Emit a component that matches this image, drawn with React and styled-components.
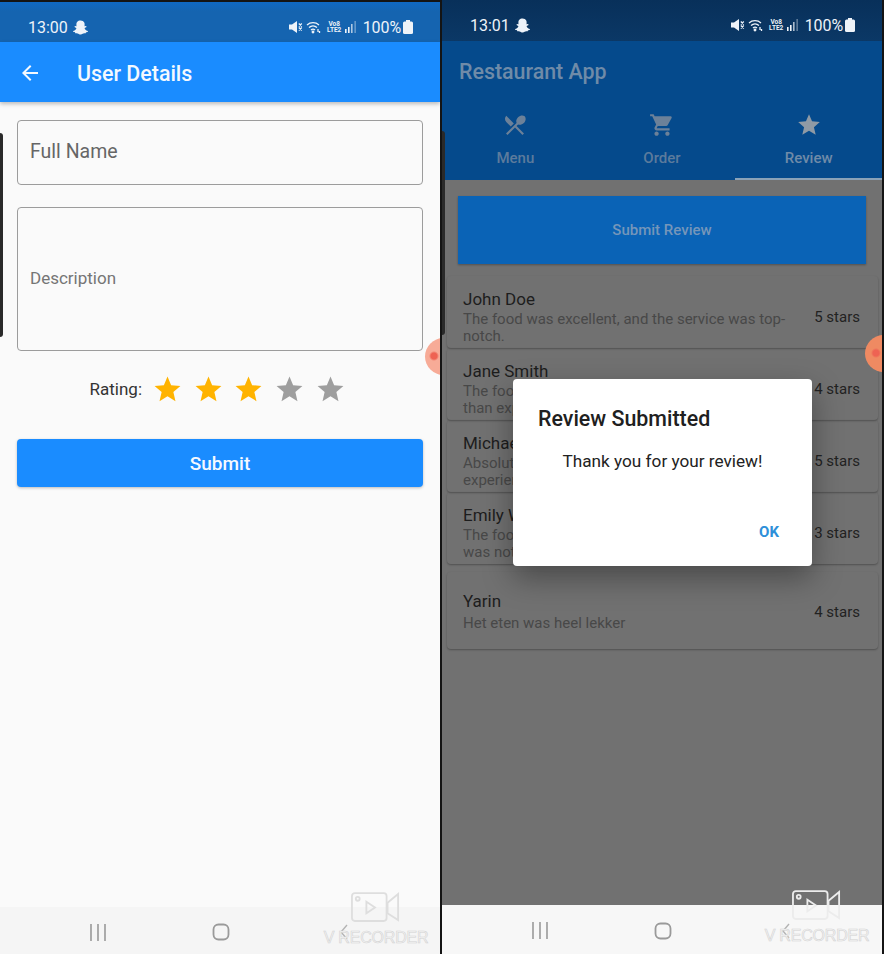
import React from "react";
import styled, { createGlobalStyle } from "styled-components";
import { FaSnapchatGhost } from "react-icons/fa";
import { MdArrowBack, MdRestaurantMenu, MdShoppingCart, MdStar } from "react-icons/md";

const GlobalStyle = createGlobalStyle`
  html, body { margin: 0; padding: 0; background: #141414; }
  body { font-family: Roboto, "Liberation Sans", sans-serif; }
  * { box-sizing: border-box; }
`;

const Screens = styled.div`
  display: flex;
  gap: 2px;
  width: 884px;
  height: 954px;
  overflow: hidden;
`;

const Phone = styled.section`
  position: relative;
  display: flex;
  flex-direction: column;
  width: 440px;
  margin-top: ${(p) => (p.$dimmed ? "0" : "2px")};
  overflow: hidden;
  background: ${(p) => (p.$dimmed ? "#717171" : "#fafafa")};
`;

const Status = styled.div`
  display: flex;
  align-items: center;
  justify-content: space-between;
  flex: none;
  height: ${(p) => (p.$dimmed ? "41px" : "40px")};
  padding: ${(p) => (p.$dimmed ? "14px 27px 5px 28px" : "15px 27px 5px 28px")};
  color: #eef3f9;
  font-size: 16px;
  background: ${(p) =>
    p.$dimmed
      ? "linear-gradient(#08305a, #0b3866)"
      : "linear-gradient(#0f69c4 0, #1564b0 9px)"};
`;

const StatusSide = styled.div`
  display: flex;
  align-items: center;
  gap: ${(p) => p.$gap || 0}px;
`;

const Volte = styled.span`
  display: flex;
  flex-direction: column;
  align-items: center;
  width: 13px;
  margin: 0 4px 0 7px;
  font-size: 6.5px;
  font-weight: 700;
  line-height: 6.5px;
`;

const Percent = styled.span`
  margin: 0 2px 0 7px;
  letter-spacing: -0.1px;
`;

const MuteIcon = () => (
  <svg width="14" height="14" viewBox="0 0 14 14" fill="currentColor" style={{ marginRight: 3 }}>
    <path d="M0 4.5h3L8 1v12L3 9.5H0z" />
    <path d="M9.8 3.5l3 3M12.8 3.5l-3 3M9.8 7.5l3 3M12.8 7.5l-3 3" stroke="currentColor" strokeWidth="1.2" />
  </svg>
);

const WifiIcon = () => (
  <svg width="15" height="14" viewBox="0 0 15 14" fill="none" stroke="currentColor" strokeWidth="1.3">
    <path d="M1 5a9 9 0 0 1 12 0" />
    <path d="M3 7.5a6 6 0 0 1 8 0" />
    <path d="M5 10a3 3 0 0 1 4 0" />
    <circle cx="7" cy="12" r="0.8" fill="currentColor" />
    <path d="M12 9v3M13.5 11v2" />
  </svg>
);

const SignalBars = () => (
  <svg width="11" height="14" viewBox="0 0 11 14" fill="currentColor">
    <rect x="0" y="9" width="1.6" height="4" />
    <rect x="3" y="7" width="1.6" height="6" />
    <rect x="6" y="4" width="1.6" height="9" opacity="0.7" />
    <rect x="9.6" y="1" width="1" height="12" opacity="0.6" />
  </svg>
);

const BatteryIcon = () => (
  <svg width="10" height="14" viewBox="0 0 10 14" fill="currentColor">
    <rect x="3" y="0" width="4" height="2" />
    <rect x="0" y="1.5" width="10" height="12.5" rx="1.5" />
  </svg>
);

const StatusBar = ({ time, dimmed }) => (
  <Status $dimmed={dimmed}>
    <StatusSide $gap={5}>
      {time}
      <FaSnapchatGhost size={15} />
    </StatusSide>
    <StatusSide>
      <MuteIcon />
      <WifiIcon />
      <Volte>
        <span>Vo8</span>
        <span>LTE2</span>
      </Volte>
      <SignalBars />
      <Percent>100%</Percent>
      <BatteryIcon />
    </StatusSide>
  </Status>
);

const AppBar = styled.header`
  display: flex;
  align-items: center;
  gap: 35px;
  flex: none;
  height: 60px;
  padding: 2px 0 0 18px;
  color: #f4f9ff;
  font-size: 21.4px;
  font-weight: 500;
  background: #1a8cff;
  box-shadow: 0 2px 4px rgba(0, 0, 0, 0.25);
`;

const Form = styled.main`
  display: flex;
  flex-direction: column;
  flex: 1;
  padding: 18px 17px 0;
`;

const Field = styled.div`
  display: flex;
  align-items: center;
  height: ${(p) => p.$height}px;
  margin-bottom: 22px;
  padding: 0 0 2px 12px;
  border: 1.5px solid #9c9c9c;
  border-radius: 4px;
  color: ${(p) => p.$color};
  font-size: ${(p) => p.$size}px;
`;

const RatingRow = styled.div`
  display: flex;
  align-items: center;
  justify-content: center;
  margin: -4px 0 30px;
  height: 40px;
  color: #333;
  font-size: 17px;
`;

const RatingLabel = styled.span`
  margin-right: 5px;
`;

const StarSlot = styled.span`
  display: flex;
  justify-content: center;
  width: 40.7px;
  color: ${(p) => (p.$on ? "#ffb300" : "#9e9e9e")};
`;

const SubmitButton = styled.button`
  height: 48px;
  border: 0;
  border-radius: 4px;
  color: #f4f9ff;
  font: 500 19px Roboto, sans-serif;
  background: #1a8cff;
  box-shadow: 0 1px 3px rgba(0, 0, 0, 0.25);
`;

const NavArea = styled.nav`
  display: grid;
  grid-template-columns: repeat(3, 123px);
  justify-content: center;
  justify-items: center;
  align-items: center;
  flex: none;
  height: ${(p) => (p.$dimmed ? "49px" : "47px")};
  padding: ${(p) => (p.$dimmed ? "2px" : "3px")} 0 0 2px;
  color: #9a9a9a;
  background: ${(p) => (p.$dimmed ? "#f7f7f7" : "#f5f5f5")};
`;

const NavBar = ({ dimmed }) => (
  <NavArea $dimmed={dimmed}>
    <svg width="18" height="17" viewBox="0 0 18 17" stroke="currentColor" strokeWidth="1.6">
      <path d="M2 0v17M9 0v17M16 0v17" />
    </svg>
    <svg width="18" height="18" viewBox="0 0 18 18" fill="none" stroke="currentColor" strokeWidth="1.8">
      <rect x="1.5" y="1.5" width="15" height="15" rx="5" />
    </svg>
    <svg width="8" height="16" viewBox="0 0 8 16" fill="none" stroke="#b4b4b4" strokeWidth="1.4">
      <path d="M7 1 1 8l6 7" />
    </svg>
  </NavArea>
);

const MarkBox = styled.div`
  position: absolute;
  left: ${(p) => p.$left}px;
  bottom: ${(p) => p.$bottom}px;
  display: flex;
  flex-direction: column;
  align-items: center;
  gap: 6px;
  width: 104px;
  pointer-events: none;
`;

const MarkText = styled.span`
  color: #f6f6f6;
  font: 400 16px "Liberation Sans", sans-serif;
  letter-spacing: -0.2px;
  white-space: nowrap;
  -webkit-text-stroke: 0.6px #d2d2d2;
`;

const Watermark = ({ left, bottom, stroke }) => (
  <MarkBox $left={left} $bottom={bottom}>
    <svg width="50" height="31" viewBox="0 0 52 32" fill="none" stroke={stroke} strokeWidth="1.9">
      <rect x="1" y="1" width="36" height="29" rx="3" />
      <circle cx="7" cy="7" r="2" />
      <path d="M16 10l9 6-9 6z" />
      <path d="M38 11l11-9v27l-11-7z" />
    </svg>
    <MarkText>V RECORDER</MarkText>
  </MarkBox>
);

const TouchDot = styled.div`
  position: absolute;
  left: ${(p) => p.$left}px;
  top: ${(p) => p.$top}px;
  width: 37px;
  height: 37px;
  border-radius: 50%;
  background: radial-gradient(circle at ${(p) => p.$dotX}px 18px, #ee6353 0 3px, ${(p) => p.$color} 5px);
`;

const SideStrip = styled.div`
  position: absolute;
  left: 0;
  top: 131px;
  width: 3px;
  height: 204px;
  border-radius: 0 3px 3px 0;
  background: #2a2a2a;
`;

const RestaurantBar = styled.header`
  display: flex;
  flex-direction: column;
  flex: none;
  height: 139px;
  background: #054a8c;
`;

const RestaurantTitle = styled.div`
  height: 60px;
  padding: 18px 0 0 17px;
  color: #6f8ba8;
  font-size: 21.4px;
  font-weight: 500;
`;

const Tabs = styled.div`
  display: grid;
  grid-template-columns: repeat(3, 1fr);
  flex: 1;
`;

const Tab = styled.div`
  display: flex;
  flex-direction: column;
  align-items: center;
  padding-top: 11px;
  border-bottom: 2px solid ${(p) => (p.$active ? "#8aa2b8" : "transparent")};
  color: ${(p) => (p.$active ? "#8f9aa5" : "#6c8199")};
  font-size: 15px;
  font-weight: 500;
`;

const TabLabel = styled.span`
  margin-top: 11px;
  color: ${(p) => (p.$active ? "#6f8ba8" : "#5c7b9c")};
`;

const ReviewBody = styled.main`
  display: flex;
  flex-direction: column;
  flex: 1;
  padding: 16px 4px 0 5px;
`;

const ReviewButton = styled.div`
  display: flex;
  align-items: center;
  justify-content: center;
  height: 68px;
  margin: 0 12px 12px 11px;
  color: #7596ba;
  font-size: 15px;
  font-weight: 500;
  background: #0a63b6;
  box-shadow: 0 1px 2px rgba(0, 0, 0, 0.3);
`;

const ReviewCard = styled.article`
  display: flex;
  align-items: center;
  justify-content: space-between;
  gap: 20px;
  height: ${(p) => (p.$tall ? "77px" : "72px")};
  margin-top: ${(p) => (p.$tall ? "8px" : "0")};
  padding: ${(p) => (p.$tall ? "2px" : "9px")} 18px 0 16px;
  border-radius: 4px;
  box-shadow: 0 1px 2px rgba(0, 0, 0, 0.3);
`;

const ReviewText = styled.div`
  flex: 1;
  color: #484848;
  font-size: 15px;
  line-height: 17px;
`;

const ReviewerName = styled.div`
  margin-bottom: ${(p) => (p.$tall ? "4px" : "2px")};
  color: #1d1d1d;
  font-size: 17px;
  line-height: 20px;
`;

const StarCount = styled.span`
  flex: none;
  color: #222;
  font-size: 15px;
`;

const Dialog = styled.div`
  position: absolute;
  left: 71px;
  top: 379px;
  display: flex;
  flex-direction: column;
  width: 299px;
  height: 187px;
  padding: 27px 25px 0;
  border-radius: 4px;
  background: #fff;
  box-shadow: 0 12px 30px rgba(0, 0, 0, 0.35);
`;

const DialogTitle = styled.h2`
  margin: 0;
  color: #202020;
  font-size: 21.4px;
  font-weight: 500;
  line-height: 25px;
`;

const DialogMessage = styled.p`
  margin: 20px 0 0;
  color: #222;
  font-size: 17.2px;
  line-height: 20px;
  text-align: center;
`;

const DialogAction = styled.span`
  margin: 52px 8px 0 auto;
  color: #2d8fd9;
  font-size: 15px;
  font-weight: 700;
`;

const reviews = [
  { name: "John Doe", text: "The food was excellent, and the service was top-notch.", stars: 5 },
  { name: "Jane Smith", text: "The food was delicious and the place was better than expected.", stars: 4 },
  { name: "Michael Brown", text: "Absolutely loved the food and it was a wonderful experience.", stars: 5 },
  { name: "Emily White", text: "The food was okay, but the service was slow and was not great.", stars: 3 },
  { name: "Yarin", text: "Het eten was heel lekker", stars: 4, tall: true },
];

const ratingStars = [true, true, true, false, false];

const tabs = [
  { label: "Menu", Icon: MdRestaurantMenu },
  { label: "Order", Icon: MdShoppingCart },
  { label: "Review", Icon: MdStar, active: true },
];

const App = () => (
  <>
    <GlobalStyle />
    <Screens>
      <Phone>
        <StatusBar time="13:00" />
        <AppBar>
          <MdArrowBack size={24} />
          <span>User Details</span>
        </AppBar>
        <Form>
          <Field $height={65} $size={19.5} $color="#666">
            Full Name
          </Field>
          <Field $height={144} $size={17} $color="#757575">
            Description
          </Field>
          <RatingRow>
            <RatingLabel>Rating:</RatingLabel>
            {ratingStars.map((on, i) => (
              <StarSlot key={i} $on={on}>
                <MdStar size={31} />
              </StarSlot>
            ))}
          </RatingRow>
          <SubmitButton>Submit</SubmitButton>
        </Form>
        <NavBar />
        <SideStrip />
        <TouchDot $left={425} $top={336} $dotX={9} $color="#f7ab97" />
        <Watermark left={324} bottom={7} stroke="#dedede" />
      </Phone>

      <Phone $dimmed>
        <StatusBar time="13:01" dimmed />
        <RestaurantBar>
          <RestaurantTitle>Restaurant App</RestaurantTitle>
          <Tabs>
            {tabs.map(({ label, Icon, active }) => (
              <Tab key={label} $active={active}>
                <Icon size={26} />
                <TabLabel $active={active}>{label}</TabLabel>
              </Tab>
            ))}
          </Tabs>
        </RestaurantBar>
        <ReviewBody>
          <ReviewButton>Submit Review</ReviewButton>
          {reviews.map((r) => (
            <ReviewCard key={r.name} $tall={r.tall}>
              <ReviewText>
                <ReviewerName $tall={r.tall}>{r.name}</ReviewerName>
                {r.text}
              </ReviewText>
              <StarCount>{r.stars} stars</StarCount>
            </ReviewCard>
          ))}
        </ReviewBody>
        <NavBar dimmed />
        <SideStrip />
        <TouchDot $left={423} $top={335} $dotX={11} $color="#ef8a62" />
        <Dialog>
          <DialogTitle>Review Submitted</DialogTitle>
          <DialogMessage>Thank you for your review!</DialogMessage>
          <DialogAction>OK</DialogAction>
        </Dialog>
        <Watermark left={323} bottom={9} stroke="#ececec" />
      </Phone>
    </Screens>
  </>
);

export default App;
